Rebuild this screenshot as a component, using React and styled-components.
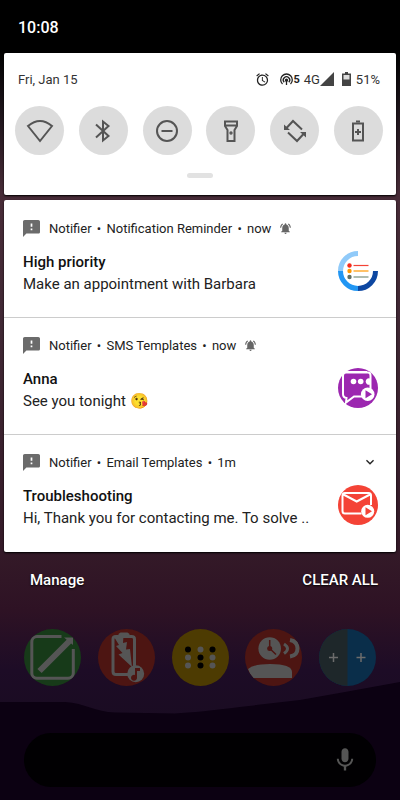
import styled, { createGlobalStyle, css } from "styled-components";
import {
	MdAlarm,
	MdExpandMore,
	MdFeedback,
	MdMic,
	MdNotificationsActive,
} from "react-icons/md";

const toggles = [
	{ label: "Wi-Fi", icon: <path d="M2 9Q14-1 26 9L14 24Z" /> },
	{
		label: "Bluetooth",
		icon: <path d="M7 7.5 19.5 19 14 23.5V4.5L19.5 9 7 20.5" />,
	},
	{
		label: "Do not disturb",
		icon: (
			<>
				<circle cx="14" cy="14" r="10" />
				<path d="M8.5 14h11" />
			</>
		),
	},
	{
		label: "Flashlight",
		icon: (
			<>
				<path d="M8 4.5h12V9l-2.5 4v11h-7V13L8 9ZM8 8.5h12" />
				<circle cx="14" cy="16" r="0.7" />
			</>
		),
	},
	{
		label: "Auto-rotate",
		icon: (
			<>
				<path d="M21 12.5 12 4 5.5 11M7 15.5 16 24 22.500 17" />
				<path
					d="M3 7.5 9 13H3ZM25 20.5 19 15H25Z"
					fill="currentColor"
					stroke="none"
				/>
			</>
		),
	},
	{
		label: "Battery saver",
		icon: (
			<>
				<path d="M9 6.5h10v17H9ZM14 12v6M11 15h6" />
				<path d="M12 4.5h4" />
			</>
		),
	},
];

const ReminderIcon = () => (
	<svg viewBox="0 0 40 40" fill="none" strokeWidth="5">
		<path d="M20 2.5A17.5 17.5 0 0 0 2.5 20" stroke="#90caf9" />
		<path d="M2.5 20A17.5 17.5 0 0 0 20 37.5" stroke="#2196f3" />
		<path d="M20 37.5A17.5 17.5 0 0 0 37.5 20" stroke="#0d47a1" />
		<g strokeWidth="1.2">
			<path d="M15.5 14.5h15" stroke="#f44336" />
			<path d="M15.5 20h15" stroke="#ff9800" />
			<path d="M15.5 26h15" stroke="#78907c" />
		</g>
		<circle cx="11.5" cy="14.5" r="2.2" fill="#f42a1c" />
		<circle cx="11.5" cy="20" r="2.2" fill="#ff9800" />
		<circle cx="11.5" cy="26" r="2.2" fill="#5f6f64" />
	</svg>
);

const SmsIcon = () => (
	<svg viewBox="0 0 40 40" fill="none">
		<circle cx="20" cy="20" r="20" fill="#9c27b0" />
		<path
			d="M24 28.5H16L8 34.5 8.5 30Q5 29.5 5 26V7.5Q5 4.5 8 4.5H30Q32.5 4.5 32.5 7.5V21"
			stroke="#fff"
			strokeWidth="2"
		/>
		<path d="M7 3.5H29" stroke="#fff" strokeWidth="1" />
		<circle cx="15.5" cy="13.5" r="2.8" fill="#fff" />
		<circle cx="22.7" cy="13.5" r="2.8" fill="#fff" />
		<path d="M32 10.5A3.2 3.2 0 1 0 32 16.5Z" fill="#fff" />
		<circle cx="29.7" cy="26.3" r="6.8" fill="#fff" />
		<path d="M27.5 22.3V30.3L34 26.3Z" fill="#9c27b0" />
	</svg>
);

const EmailIcon = () => (
	<svg viewBox="0 0 40 40" fill="none">
		<circle cx="20" cy="20" r="20" fill="#f44336" />
		<path
			d="M23.5 28.5H7Q4.5 28.5 4.5 26V10.5Q4.5 8 7 8H30.5Q33 8 33 10.5V20M5.5 9.5 18.7 16.5 32 9.5"
			stroke="#fff"
			strokeWidth="2"
		/>
		<circle cx="29.7" cy="26.3" r="6.5" fill="#fff" />
		<path d="M27.5 22.3V30.3L34 26.3Z" fill="#f44336" />
	</svg>
);

const notifications = [
	{
		channel: "Notification Reminder",
		time: "now",
		alerting: true,
		title: "High priority",
		text: "Make an appointment with Barbara",
		icon: <ReminderIcon />,
	},
	{
		channel: "SMS Templates",
		time: "now",
		alerting: true,
		title: "Anna",
		text: "See you tonight 😘",
		icon: <SmsIcon />,
	},
	{
		channel: "Email Templates",
		time: "1m",
		expandable: true,
		title: "Troubleshooting",
		text: "Hi, Thank you for contacting me. To solve ..",
		icon: <EmailIcon />,
	},
];

// Иконки в доке затемнены шторкой
const dimWhite = "#555";

const apps = [
	{
		label: "Notes",
		color: "#173a19",
		icon: (
			<>
				<path
					d="M37.5 7.5H13Q7.8 7.5 7.8 13V44Q7.8 49.3 13 49.3H44Q49.3 49.3 49.3 44V20"
					fill="none"
					stroke={dimWhite}
					strokeWidth="3"
				/>
				<path d="M15.5 42 46 11.5" stroke={dimWhite} strokeWidth="6" />
				<path d="M40 8.5H49V16Z" fill={dimWhite} />
			</>
		),
	},
	{
		label: "Battery sounds",
		color: "#4d1512",
		icon: (
			<>
				<path
					d="M30 45.5H18Q15 45.5 15 42.5V10Q15 7.5 18 7.5H33.5Q36.5 7.5 36.5 10V37"
					fill="none"
					stroke={dimWhite}
					strokeWidth="3"
				/>
				<path d="M20.5 7V5L22.5 3.5H29.5L31.5 5V7Z" fill={dimWhite} />
				<path
					d="M15.5 7H25.5L25 14 29 13 28 20.5 32 20 34 38 20.5 25.5 24.5 24 18 17 21 16Z"
					fill={dimWhite}
				/>
				<circle cx="37.7" cy="44.7" r="8.5" fill={dimWhite} />
				<path d="M37 39h5v3h-3v6.5a3 3 0 1 1-2-2.5Z" fill="#4d1512" />
			</>
		),
	},
	{
		label: "Dots",
		color: "#4d3b02",
		icon: [
			[16, 20.5, "#000"],
			[28.5, 20.5, dimWhite],
			[40.5, 20.5, "#000"],
			[16, 28.5, dimWhite],
			[28.5, 28.5, "#000"],
			[40.5, 28.5, dimWhite],
			[16, 36.5, dimWhite],
			[28.5, 36.5, "#000"],
			[40.5, 36.5, dimWhite],
		].map(([x, y, fill]) => (
			<circle key={`${x}-${y}`} cx={x} cy={y} r="3" fill={fill} />
		)),
	},
	{
		label: "Talking clock",
		color: "#4d1512",
		icon: (
			<>
				<circle cx="24.7" cy="19.5" r="11.3" fill={dimWhite} />
				<path
					d="M24.7 11V19.5L31 25.5"
					fill="none"
					stroke="#4d1512"
					strokeWidth="1.5"
				/>
				<circle cx="24.7" cy="19.5" r="2.5" fill="#4d1512" />
				<path
					d="M39 15Q46 19.5 39 24.5"
					fill="none"
					stroke={dimWhite}
					strokeWidth="3"
				/>
				<path
					d="M45 11Q52.5 12.5 52.5 19.5T45 27.5"
					fill="none"
					stroke={dimWhite}
					strokeWidth="4"
				/>
				<path
					d="M3 40Q9 35 25 35 47 35 47 43V49H8Q4.5 45 3 40Z"
					fill={dimWhite}
				/>
			</>
		),
	},
	{
		label: "Counter",
		color: "#0a2e4a",
		icon: (
			<>
				<path d="M28.5 0A28.5 28.5 0 0 0 28.5 57Z" fill="#1e272a" />
				<path
					d="M10 28.5h9M14.5 24v9M37.5 28.5h9M42 24v9"
					stroke="#6c6c6c"
					strokeWidth="1.5"
				/>
			</>
		),
	},
];

const Notification = ({
	channel,
	time,
	alerting,
	expandable,
	title,
	text,
	icon,
}) => (
	<NotificationItem>
		<NotificationHeader>
			<MdFeedback className="app-icon" viewBox="2 2 20 20" />
			<span>
				Notifier <Separator>•</Separator> {channel} <Separator>•</Separator>{" "}
				{time}
			</span>
			{alerting && <MdNotificationsActive className="bell" />}
			{expandable && (
				<ExpandButton aria-label="Expand">
					<MdExpandMore />
				</ExpandButton>
			)}
		</NotificationHeader>
		<NotificationBody>
			<div>
				<h2>{title}</h2>
				<p>{text}</p>
			</div>
			{icon}
		</NotificationBody>
	</NotificationItem>
);

const App = () => {
	return (
		<>
			<GlobalStyle />
			<Screen>
				<Hills viewBox="0 0 400 118" preserveAspectRatio="none">
					<path
						d="M0 20H65C85 21 95 30 115 30.5L175 31.5Q200 30 240 25L300 18 345 10 400 0V118H0Z"
						fill="#0c0112"
					/>
				</Hills>
				<Clock>10:08</Clock>

				<QuickSettings>
					<StatusRow>
						<span>Fri, Jan 15</span>
						<StatusIcons>
							<MdAlarm size={15} color="#222" />
							<Hotspot>
								<svg
									width="13"
									height="13"
									viewBox="0 0 13 13"
									fill="none"
									stroke="currentColor"
									strokeWidth="1.3"
								>
									<path d="M2.5 11A5.8 5.8 0 1 1 10.5 11" />
									<path d="M4.2 9.2A3.2 3.2 0 1 1 8.8 9.2" />
									<circle cx="6.5" cy="7.2" r="1" fill="currentColor" />
									<path d="M6.5 8v4" />
								</svg>
								<b>5</b>
							</Hotspot>
							<Network>
								4G
								<svg width="14" height="14" viewBox="0 0 14 14">
									<path d="M0 14 14 0V14Z" fill="#444" />
								</svg>
							</Network>
							<Battery>
								<svg width="9" height="14" viewBox="0 0 9 14">
									<path d="M3 0H6V1.5H9V14H0V1.5H3Z" fill="#444" />
									<path d="M1.5 3H7.5V7.5H1.5Z" fill="#ddd" />
								</svg>
								51%
							</Battery>
						</StatusIcons>
					</StatusRow>
					<ToggleRow>
						{toggles.map(({ label, icon }) => (
							<ToggleButton key={label} aria-label={label}>
								<svg
									viewBox="0 0 28 28"
									fill="none"
									stroke="currentColor"
									strokeWidth="2"
								>
									{icon}
								</svg>
							</ToggleButton>
						))}
					</ToggleRow>
					<Handle aria-label="Expand quick settings" />
				</QuickSettings>

				<Notifications>
					{notifications.map((item) => (
						<Notification key={item.channel} {...item} />
					))}
				</Notifications>

				<Actions>
					<TextButton>Manage</TextButton>
					<TextButton>CLEAR ALL</TextButton>
				</Actions>

				<Dock>
					{apps.map(({ label, color, icon }) => (
						<AppButton key={label} aria-label={label} $color={color}>
							<svg viewBox="0 0 57 57">{icon}</svg>
						</AppButton>
					))}
				</Dock>

				<SearchBar>
					<input type="text" aria-label="Search" />
					<button aria-label="Voice search">
						<MdMic size={28} />
					</button>
				</SearchBar>
			</Screen>
		</>
	);
};

export default App;

const GlobalStyle = createGlobalStyle`
	* {
		box-sizing: border-box;
		margin: 0;
		padding: 0;
	}

	body {
		background: #0c0112;
		font-family: Roboto, sans-serif;
	}

	button,
	input {
		border: none;
		background: none;
		font: inherit;
		color: inherit;
	}

	svg {
		display: block;
		flex-shrink: 0;
	}
`;

const panel = css`
	margin: 0 4px;
	background: #fff;
	border-radius: 2px;
	box-shadow: 0 1px 2px #000;
`;

const Screen = styled.main`
	position: relative;
	display: flex;
	flex-direction: column;
	min-height: 100vh;
	padding-bottom: 13px;
	background: linear-gradient(
		#000 0,
		#000 50px,
		#1c141a 110px,
		#482c38 195px,
		#402834 330px,
		#341a28 550px,
		#2e1224 610px,
		#1d0c26 670px,
		#1a0c22 720px
	);
`;

const Hills = styled.svg`
	position: absolute;
	left: 0;
	bottom: 0;
	width: 100%;
	height: 118px;
`;

const Clock = styled.header`
	height: 53px;
	padding: 18px 18px 0;
	font-size: 16px;
	line-height: 20px;
	font-weight: 500;
	color: #fff;
`;

const QuickSettings = styled.section`
	${panel}
	padding: 16px 11px 17px;
	margin-bottom: 5px;
`;

const StatusRow = styled.div`
	display: flex;
	align-items: center;
	justify-content: space-between;
	height: 20px;
	padding: 0 5px 0 3px;
	font-size: 13px;
	color: #333;
`;

const StatusIcons = styled.div`
	display: flex;
	align-items: center;
`;

const Hotspot = styled.span`
	display: flex;
	align-items: center;
	margin-left: 10px;
	color: #222;

	b {
		font-size: 11px;
	}
`;

const Network = styled.span`
	display: flex;
	align-items: center;
	margin-left: 4px;
`;

const Battery = styled.span`
	display: flex;
	align-items: center;
	gap: 5px;
	margin-left: 8px;
`;

const ToggleRow = styled.div`
	display: flex;
	justify-content: space-between;
	margin-top: 17px;
	padding-right: 2px;
`;

const ToggleButton = styled.button`
	display: flex;
	align-items: center;
	justify-content: center;
	width: 49px;
	height: 49px;
	border-radius: 50%;
	background: #dcdcdc;
	color: #555;

	svg {
		width: 28px;
		height: 28px;
	}
`;

const Handle = styled.button`
	display: block;
	width: 26px;
	height: 5px;
	margin: 18px auto 0;
	border-radius: 3px;
	background: #e2e2e2;
`;

const Notifications = styled.section`
	${panel}
	padding-bottom: 1px;
`;

const NotificationItem = styled.article`
	height: 117px;
	padding: 18px 18px 0 19px;

	& + & {
		padding-top: 17px;
		border-top: 1px solid #ccc;
	}
`;

const NotificationHeader = styled.div`
	display: flex;
	align-items: center;
	height: 20px;
	font-size: 13px;
	color: #222;

	.app-icon {
		width: 17px;
		height: 17px;
		margin-right: 9px;
		color: #6b6b6b;
	}

	.bell {
		width: 13px;
		height: 13px;
		margin-left: 8px;
		color: #666;
	}
`;

const Separator = styled.span`
	margin: 0 2px;
`;

const ExpandButton = styled.button`
	margin-left: auto;

	svg {
		width: 16px;
		height: 16px;
	}
`;

const NotificationBody = styled.div`
	display: flex;
	justify-content: space-between;
	align-items: flex-start;
	margin-top: 13px;
	color: #222;

	h2,
	p {
		font-size: 15px;
		line-height: 22px;
	}

	h2 {
		font-weight: 500;
		color: #111;
	}

	svg {
		width: 40px;
		height: 40px;
	}
`;

const Actions = styled.div`
	display: flex;
	justify-content: space-between;
	padding: 18px 22px 0 30px;
`;

const TextButton = styled.button`
	font-size: 15px;
	line-height: 20px;
	font-weight: 500;
	color: #fff;
	text-shadow: 0 1px 2px #000;
`;

const Dock = styled.nav`
	display: flex;
	justify-content: space-between;
	padding: 39px 24px 0;
	z-index: 1;
`;

const AppButton = styled.button`
	width: 57px;
	height: 57px;
	border-radius: 50%;
	overflow: hidden;
	background: ${({ $color }) => $color};
`;

const SearchBar = styled.div`
	display: flex;
	align-items: center;
	height: 54px;
	margin: auto 24px 0;
	padding: 0 17px 0 24px;
	border-radius: 27px;
	background: #010002;
	color: #555;
	z-index: 1;

	input {
		flex: 1;
		min-width: 0;
	}
`;
